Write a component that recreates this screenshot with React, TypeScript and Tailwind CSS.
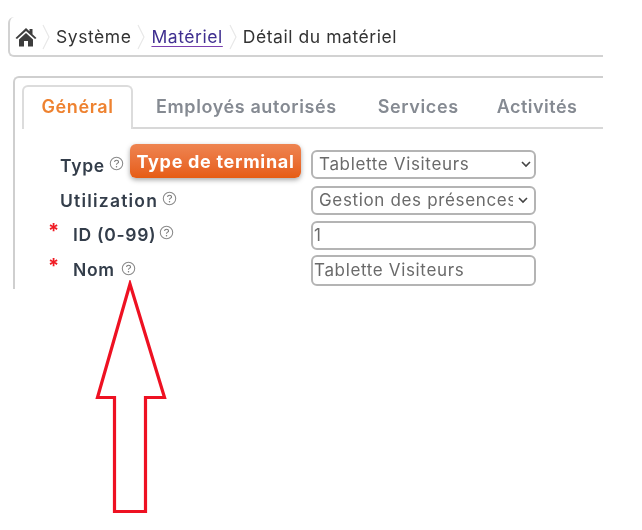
const font = "[font-family:Inter,'Liberation_Sans',sans-serif]";

function Help({ className = "" }: { className?: string }) {
  return (
    <svg width="15" height="15" viewBox="0 0 14 14" className={className} fill="none">
      <circle cx="7" cy="7" r="5.8" stroke="#8a8a8a" strokeWidth="1" />
      <path d="M5.200 5.600C5.300 4.500 6 4 7 4s1.900.6 1.900 1.500C8.900 6.700 7 6.700 7 8.100" stroke="#777" strokeWidth="1" />
      <circle cx="7" cy="10" r=".7" fill="#777" />
    </svg>
  );
}

function Sep() {
  return (
    <svg width="10" height="26" viewBox="0 0 10 26" fill="none" className="shrink-0">
      <path d="M2 1 L8 13 L2 25" stroke="#e8e8e8" strokeWidth="1.2" />
    </svg>
  );
}

function Chevron() {
  return (
    <svg width="10" height="7" viewBox="0 0 10 7" fill="none" className="shrink-0">
      <path d="M1 1 L5 5 L9 1" stroke="#444" strokeWidth="1.600" />
    </svg>
  );
}

function Field({ children, h, mt }: { children: React.ReactNode; h: string; mt: string }) {
  return (
    <div className={`flex w-[225px] items-center overflow-hidden rounded-[6px] border-2 border-[#b4b4b4] bg-white text-[17px] leading-none tracking-[0.65px] text-[#6a6a6a] ${h} ${mt}`}>
      {children}
    </div>
  );
}

function Label({ text, star, helpClass, mt, wide }: { text: string; star?: boolean; helpClass?: string; mt: string; wide?: boolean }) {
  return (
    <div className={`relative flex h-[22px] items-center ${mt} ${star ? "pl-[23px]" : "pl-[10px]"}`}>
      {star && <span className="absolute left-[-2px] top-[-3px] text-[20px] font-bold leading-none text-[#f01c24]">*</span>}
      <span className={`text-[17.500px] font-semibold leading-none text-[#333d4a] ${wide ? "tracking-[1.2px]" : "tracking-[0.7px]"}`}>{text}</span>
      <Help className={helpClass ?? ""} />
    </div>
  );
}

export default function App() {
  return (
    <div className={`relative h-[530px] w-[642px] overflow-hidden bg-white ${font} blur-[0.5px]`}>
      <div className="pl-[8px] pt-[17px]">
        <nav className="flex h-[40px] w-[595px] items-center rounded-bl-[6px] rounded-tl-[6px] border-b-2 border-l-2 border-[#d2d2d2] pl-[5px] pt-[2px] text-[17.500px] tracking-[0.55px] text-[#333]">
          <svg width="22" height="20" viewBox="0 0 22 20" className="shrink-0" fill="#3d3d3d">
            <path d="M11 1 L14.500 4.300 V2 H17.500 V7.200 L21.500 11 L20 12 L11 4 L2 12 L.5 11 Z" />
            <path d="M4 12.500 L11 6 L18 12.500 V19.500 H13 V14 H9 V19.500 H4 Z" />
          </svg>
          <span className="ml-[4px]"><Sep /></span>
          <span className="ml-[5px]">Système</span>
          <span className="ml-[5px]"><Sep /></span>
          <span className="ml-[5px] text-[#3f2f90] underline decoration-[#7a3fb0] underline-offset-[3px]">Matériel</span>
          <span className="ml-[5px]"><Sep /></span>
          <span className="ml-[5px]">Détail du matériel</span>
        </nav>

        <section className="ml-[5px] mt-[19px] h-[213px] w-[590px] rounded-tl-[6px] border-l-2 border-t-2 border-[#cfcfcf] pl-[7px] pt-[7px]">
          <div className="flex h-[44px] w-[581px] items-stretch border-b-2 border-[#d8d8d8]">
            <div className="mb-[-2px] flex w-[111px] items-center justify-center rounded-t-[6px] border-x-2 border-t-2 border-[#dcdcdc] bg-white pb-[4px] text-[18px] font-semibold tracking-[0.6px] text-[#ee8230]">
              Général
            </div>
            <div className="flex items-center text-[18px] font-semibold tracking-[0.6px] text-[#858a92]">
              <span className="ml-[23px]">Employés autorisés</span>
              <span className="ml-[41px]">Services</span>
              <span className="ml-[38px] tracking-[0.5px]">Activités</span>
            </div>
          </div>

          <div className="flex">
            <div className="ml-[28px] w-[261px] pt-[20px]">
              <Label text="Type" mt="mt-[6px]" helpClass="ml-[4px] mt-[-6px]" />
              <Label text="Utilization" wide mt="mt-[13px]" helpClass="ml-[4px] mt-[-6px]" />
              <Label text="ID (0-99)" star mt="mt-[12px]" helpClass="ml-[3px] mt-[-5px]" />
              <Label text="Nom" star mt="mt-[13px]" helpClass="ml-[6px] mt-[-4px]" />
            </div>
            <div className="pt-[21px]">
              <Field h="h-[29px]" mt="mt-0">
                <span className="flex-1 whitespace-nowrap pl-[6px]">Tablette Visiteurs</span>
                <span className="mr-[3px]"><Chevron /></span>
              </Field>
              <Field h="h-[29px]" mt="mt-[7px]">
                <span className="w-[200px] shrink-0 overflow-hidden whitespace-nowrap pl-[6px]">Gestion des présences</span>
                <span className="ml-[5px]"><Chevron /></span>
              </Field>
              <Field h="h-[29px]" mt="mt-[6px]">
                <span className="pl-[1px]">1</span>
              </Field>
              <Field h="h-[31px]" mt="mt-[5px]">
                <span className="whitespace-nowrap pl-[1px]">Tablette Visiteurs</span>
              </Field>
            </div>
          </div>
        </section>
      </div>

      <div className="absolute left-[130px] top-[144px] flex h-[34px] w-[171px] items-center justify-center rounded-[6px] bg-gradient-to-b from-[#ee8450] to-[#e65c12] text-[18px] font-bold tracking-[0.7px] text-white shadow-[0_2px_5px_rgba(0,0,0,0.35)]">
        Type de terminal
      </div>

      <svg width="90" height="240" viewBox="0 0 90 240" fill="none" className="absolute left-[85px] top-[280px]">
        <path d="M45 4 L12.500 117.500 H29.500 V231.500 H60.500 V117.500 H79.500 Z" stroke="#ee1122" strokeWidth="3.200" strokeLinejoin="miter" />
      </svg>
    </div>
  );
}
